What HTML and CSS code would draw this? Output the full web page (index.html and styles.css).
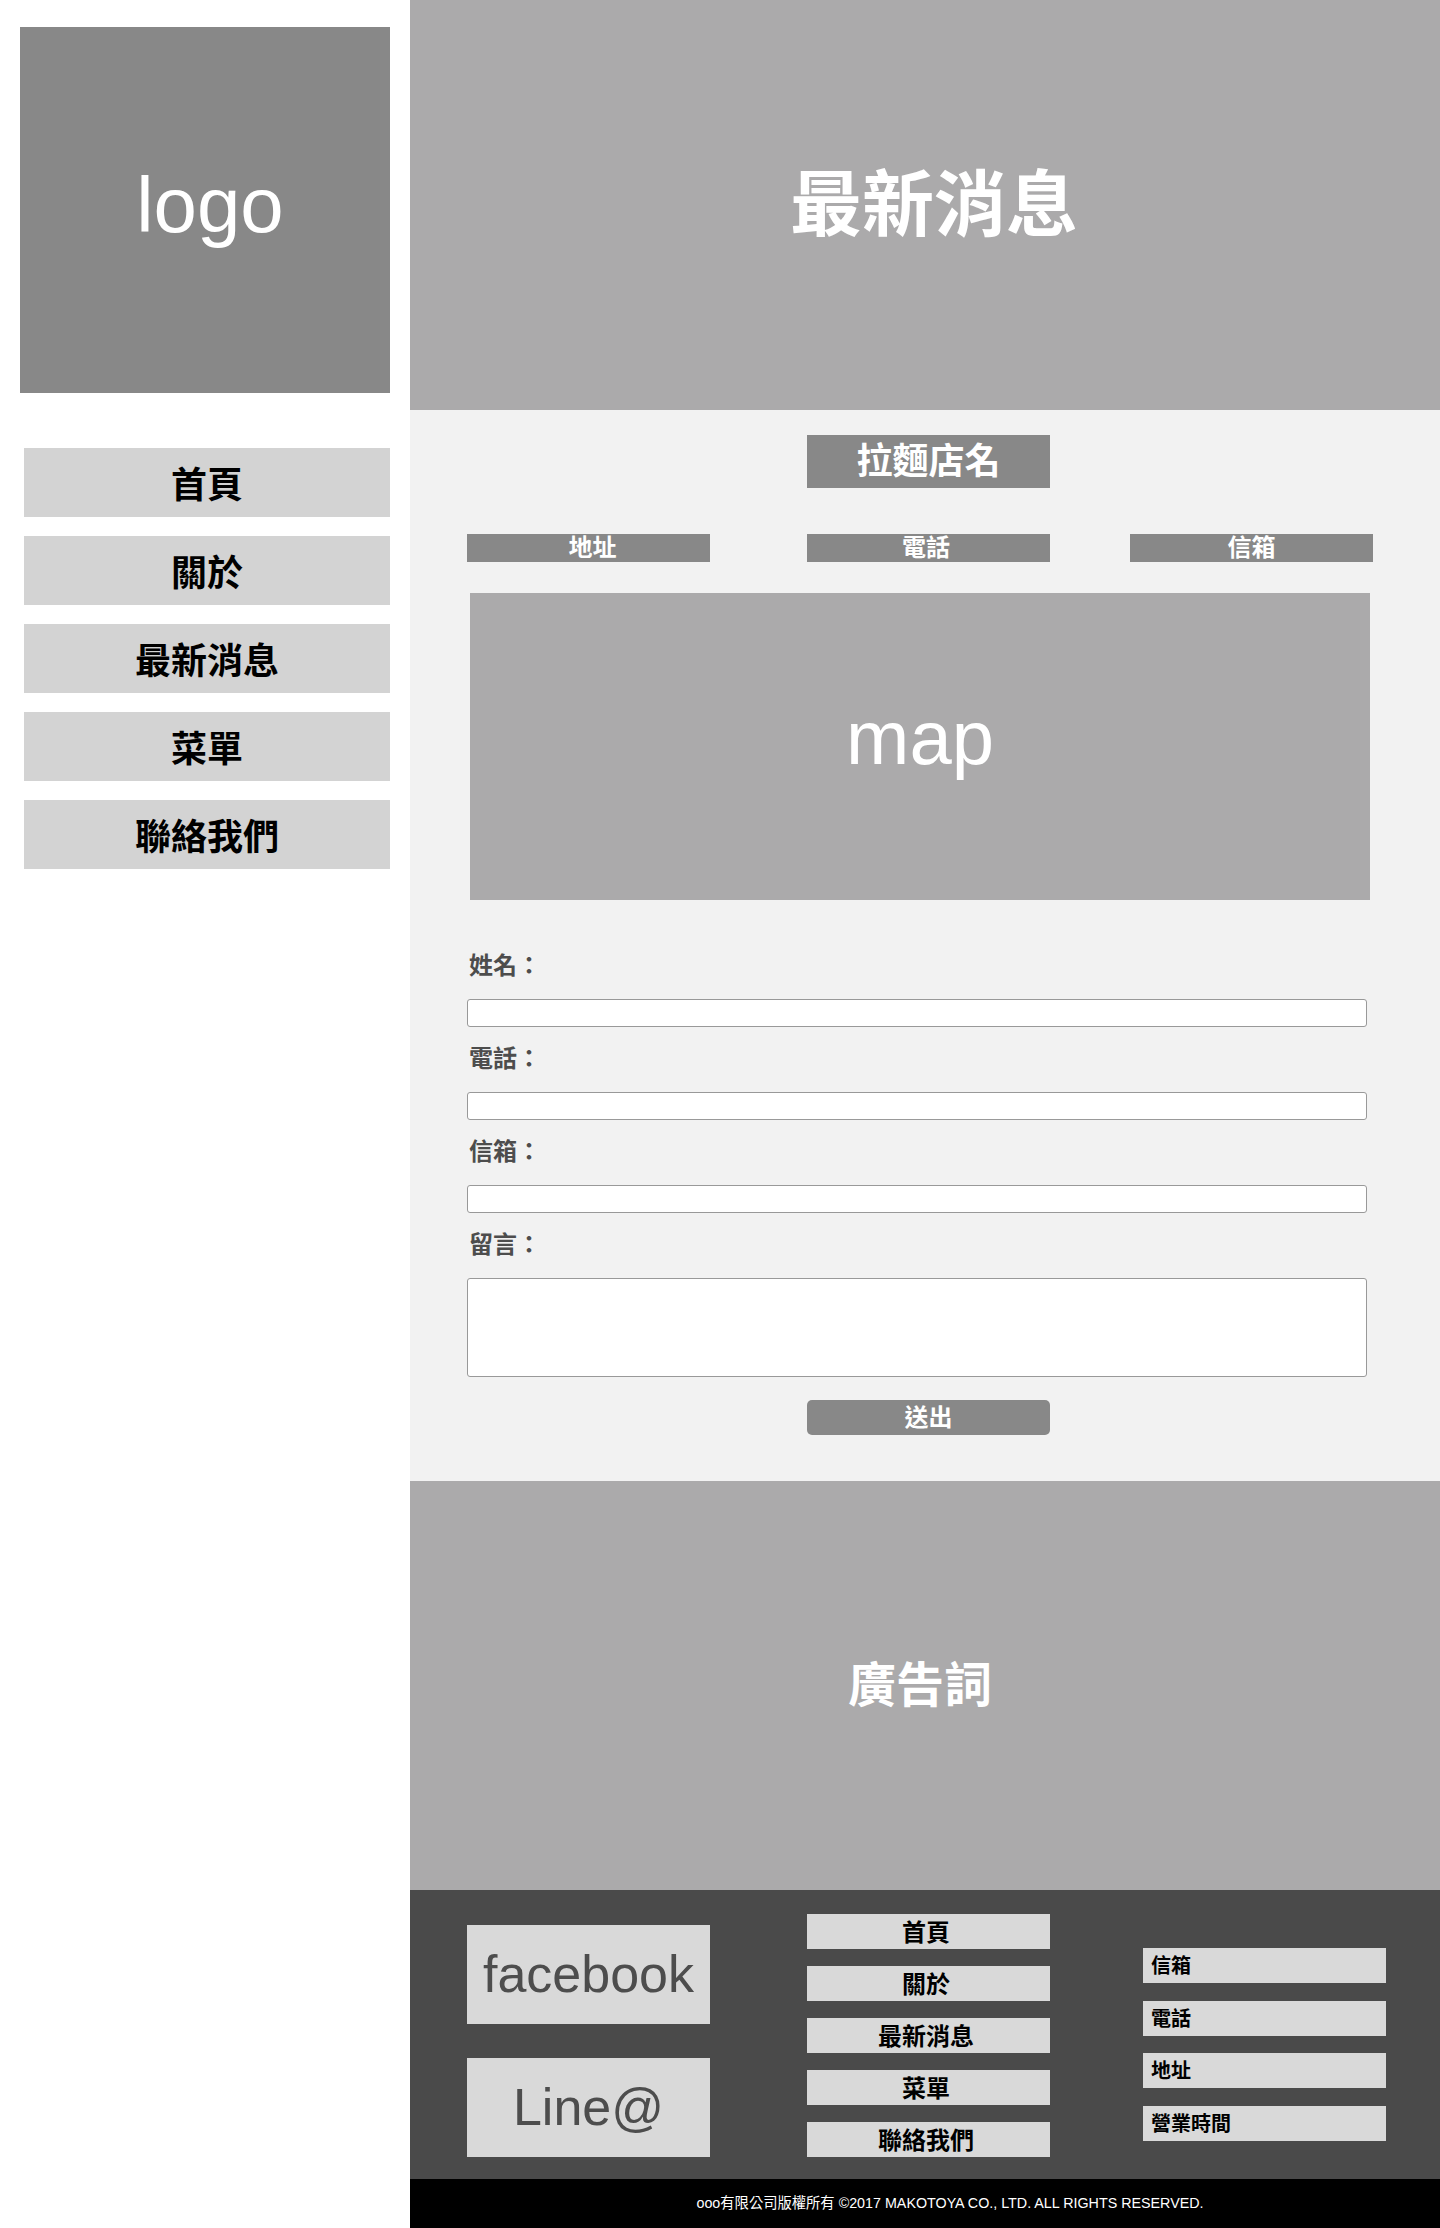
FILE: index.html
```html
<!DOCTYPE html>
<html>
<head>
    <meta charset="utf-8">
    <title>拉麵店 - 最新消息</title>
    <!-- Add style/CSS -->
    <link rel="stylesheet" href="styles.css">
</head>
<body>
<div class="page">
    <!-- Left side: logo and menu -->
    <aside class="sidebar">
        <div class="logo">logo</div>
        <ul class="side-nav">
            <li><a href="#">首頁</a></li>
            <li><a href="#">關於</a></li>
            <li><a href="#">最新消息</a></li>
            <li><a href="#">菜單</a></li>
            <li><a href="#">聯絡我們</a></li>
        </ul>
    </aside>

    <main class="main">
        <!-- Page banner -->
        <section class="banner">
            <h1>最新消息</h1>
        </section>

        <!-- Shop info and contact form -->
        <section class="contact">
            <h2 class="shop-name">拉麵店名</h2>
            <div class="info-row">
                <div class="info-box info-addr">地址</div>
                <div class="info-box info-phone">電話</div>
                <div class="info-box info-mail">信箱</div>
            </div>
            <div class="map">map</div>

            <form class="contact-form">
                <label for="name">姓名：</label>
                <input type="text" id="name">
                <label for="phone">電話：</label>
                <input type="text" id="phone">
                <label for="mail">信箱：</label>
                <input type="text" id="mail">
                <label for="msg">留言：</label>
                <textarea id="msg"></textarea>
                <button type="button">送出</button>
            </form>
        </section>

        <!-- Slogan -->
        <section class="ad">
            <p>廣告詞</p>
        </section>

        <footer class="site-footer">
            <div class="social">
                <a href="#" class="social-box">facebook</a>
                <a href="#" class="social-box">Line@</a>
            </div>
            <ul class="foot-nav">
                <li>首頁</li>
                <li>關於</li>
                <li>最新消息</li>
                <li>菜單</li>
                <li>聯絡我們</li>
            </ul>
            <ul class="foot-info">
                <li>信箱</li>
                <li>電話</li>
                <li>地址</li>
                <li>營業時間</li>
            </ul>
        </footer>
        <div class="copyright">ooo有限公司版權所有 ©2017 MAKOTOYA CO., LTD. ALL RIGHTS RESERVED.</div>
    </main>
</div>
</body>
</html>
```

FILE: styles.css
```css
body {
    margin: 0;
    background: #fff;
    font-family: "Liberation Sans", "Noto Sans CJK TC", sans-serif;
}

ul {
    list-style: none;
    margin: 0;
    padding: 0;
}

.page {
    display: flex;
}

/* Sidebar */
.sidebar {
    width: 410px;
    flex: none;
    padding: 27px 0 0 20px;
    box-sizing: border-box;
}

.logo {
    width: 370px;
    height: 366px;
    box-sizing: border-box;
    padding-left: 10px;
    background: #888;
    color: #fff;
    font-size: 78px;
    line-height: 356px;
    text-align: center;
}

.side-nav {
    margin: 55px 0 0 4px;
    width: 366px;
}

.side-nav li {
    margin-bottom: 19px;
}

.side-nav a {
    display: block;
    height: 69px;
    line-height: 75px;
    background: #d3d3d3;
    color: #000;
    text-align: center;
    text-decoration: none;
    font-size: 36px;
    font-weight: bold;
}

/* Main column */
.main {
    flex: 1;
}

.banner {
    height: 410px;
    background: #abaaab;
    display: flex;
    align-items: center;
    justify-content: center;
    padding-left: 18px;
}

.banner h1 {
    margin: 0;
    color: #fff;
    font-size: 72px;
    line-height: 72px;
    font-weight: bold;
}

.contact {
    background: #f2f2f2;
    padding: 25px 0 46px 57px;
}

.shop-name {
    margin: 0 0 0 340px;
    width: 243px;
    height: 53px;
    line-height: 53px;
    background: #888;
    color: #fff;
    font-size: 36px;
    text-align: center;
}

.info-row {
    display: flex;
    margin-top: 46px;
}

.info-box {
    width: 243px;
    height: 28px;
    line-height: 28px;
    background: #888;
    color: #fff;
    font-size: 24px;
    font-weight: bold;
    text-align: center;
}

.info-addr {
    padding-left: 8px;
    width: 235px;
}

.info-phone {
    margin-left: 97px;
    padding-right: 5px;
    width: 238px;
}

.info-mail {
    margin-left: 80px;
}

.map {
    margin: 31px 0 0 3px;
    width: 900px;
    height: 307px;
    line-height: 290px;
    background: #abaaab;
    color: #fff;
    font-size: 76px;
    text-align: center;
}

/* Form */
.contact-form {
    margin-top: 54px;
}

.contact-form label {
    display: block;
    margin-left: 2px;
    font-size: 24px;
    line-height: 24px;
    font-weight: bold;
    color: #4d4d4d;
    margin-bottom: 21px;
}

.contact-form input,
.contact-form textarea {
    display: block;
    width: 900px;
    height: 28px;
    margin: 0 0 20px;
    box-sizing: border-box;
    border: 1px solid #999;
    border-radius: 3px;
    background: #fff;
    font-size: 16px;
}

.contact-form textarea {
    height: 99px;
    margin-bottom: 23px;
    resize: none;
}

.contact-form button {
    display: block;
    margin-left: 340px;
    width: 243px;
    height: 35px;
    border: none;
    border-radius: 5px;
    background: #888;
    color: #fff;
    font-family: inherit;
    font-size: 24px;
    font-weight: bold;
    line-height: 35px;
    padding: 0;
}

/* Slogan */
.ad {
    height: 409px;
    background: #abaaab;
    display: flex;
    align-items: center;
    justify-content: center;
    padding-right: 10px;
}

.ad p {
    margin: 0;
    color: #fff;
    font-size: 48px;
    line-height: 48px;
    font-weight: bold;
}

/* Footer */
.site-footer {
    height: 289px;
    box-sizing: border-box;
    background: #4a4a4a;
    display: flex;
    align-items: flex-start;
    padding-left: 57px;
}

.social {
    margin-top: 35px;
    width: 243px;
}

.social-box {
    display: block;
    height: 99px;
    line-height: 99px;
    margin-bottom: 34px;
    background: #d9d9d9;
    color: #4d4d4d;
    font-size: 52px;
    text-align: center;
    text-decoration: none;
}

.foot-nav {
    margin: 24px 0 0 97px;
    width: 243px;
}

.foot-nav li {
    height: 35px;
    line-height: 37px;
    margin-bottom: 17px;
    padding-right: 5px;
    background: #d9d9d9;
    color: #000;
    font-size: 24px;
    font-weight: bold;
    text-align: center;
}

.foot-info {
    margin: 58px 0 0 93px;
    width: 243px;
}

.foot-info li {
    height: 35px;
    line-height: 36px;
    margin-bottom: 17.5px;
    padding-left: 8px;
    background: #d9d9d9;
    color: #000;
    font-size: 20px;
    font-weight: bold;
}

.copyright {
    height: 49px;
    line-height: 49px;
    background: #000;
    color: #fff;
    font-size: 14.3px;
    text-align: center;
    padding-left: 50px;
}
```
